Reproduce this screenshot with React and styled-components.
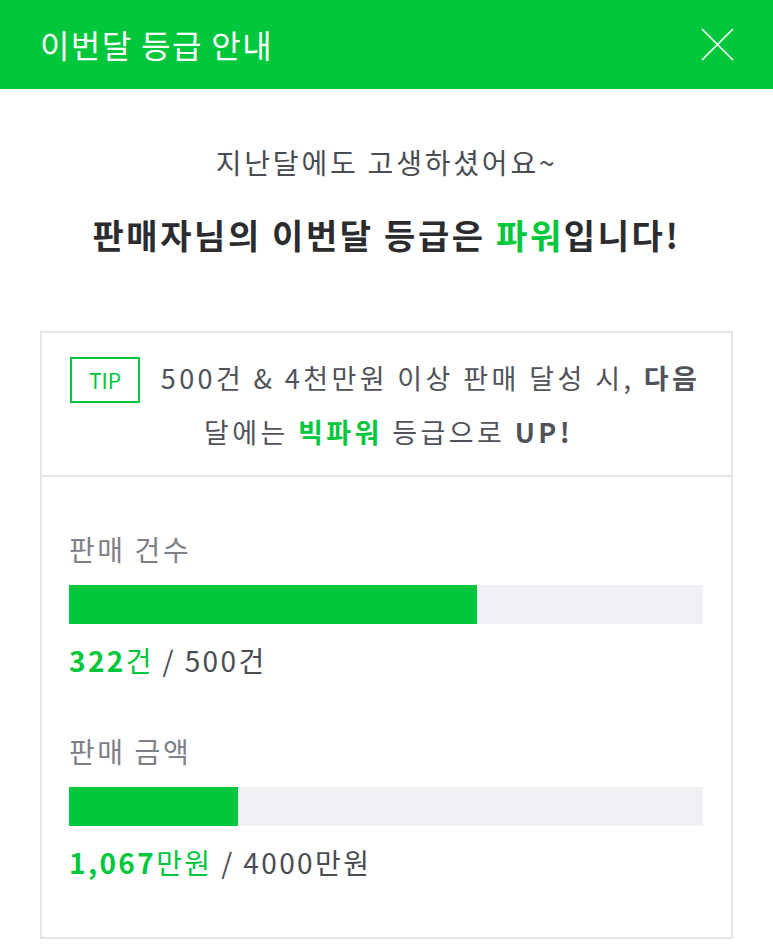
import React from 'react';
import styled, { createGlobalStyle } from 'styled-components';

const GREEN = '#00c73c';

const GlobalStyle = createGlobalStyle`
  html, body {
    margin: 0;
    padding: 0;
    background: #fff;
  }
  body {
    font-family: "Noto Sans CJK KR", "Noto Sans", sans-serif;
  }
`;

const Page = styled.div`
  width: 773px;
  min-height: 952px;
  background: #fff;
`;

const Header = styled.header`
  height: 89px;
  background: ${GREEN};
  display: flex;
  align-items: center;
  justify-content: space-between;
  padding: 0 38px 0 40px;
  box-sizing: border-box;
`;

const Title = styled.h1`
  margin: 0 0 2px;
  font-size: 32px;
  font-weight: 400;
  color: #fff;
  letter-spacing: 1.4px;
`;

const CloseButton = styled.button`
  border: 0;
  background: none;
  padding: 0;
  width: 36px;
  height: 36px;
  display: flex;
  cursor: pointer;
`;

const Greeting = styled.section`
  padding: 53px 0 74px;
  text-align: center;
`;

const SubText = styled.p`
  margin: 0;
  font-size: 28px;
  line-height: 40px;
  color: #4a4c53;
  letter-spacing: 2.8px;
`;

const MainText = styled.p`
  margin: 31px 0 0;
  font-size: 34px;
  line-height: 44px;
  font-weight: 700;
  color: #2b2c30;
  letter-spacing: 2.6px;
`;

const Green = styled.span`
  color: ${GREEN};
  font-weight: ${p => (p.$bold ? 700 : 'inherit')};
`;

const Strong = styled.b`
  font-weight: 700;
`;

const Card = styled.div`
  margin: 0 40px;
  border: 2px solid #e3e5ea;
  height: 608px;
  box-sizing: border-box;
`;

const TipBox = styled.div`
  border-bottom: 2px solid #e3e5ea;
  padding: 18px 24px 0 28px;
  height: 144px;
  box-sizing: border-box;
  text-align: center;
  font-size: 27px;
  line-height: 54px;
  color: #4f525a;
  letter-spacing: 3.4px;
`;

const TipBadge = styled.span`
  float: left;
  display: inline-flex;
  align-items: center;
  justify-content: center;
  width: 70px;
  height: 46px;
  margin: 6px 14px 0 0;
  border: 2px solid ${GREEN};
  box-sizing: border-box;
  color: ${GREEN};
  font-size: 21px;
  line-height: 1;
  letter-spacing: 0;
`;

const Stats = styled.div`
  padding: 52px 28px 0 27px;
`;

const Stat = styled.div`
  margin-bottom: 51px;
`;

const StatLabel = styled.div`
  font-size: 28px;
  color: #7e8089;
  letter-spacing: 2.6px;
  line-height: 40px;
`;

const Bar = styled.div`
  margin-top: 16px;
  height: 39px;
  background: #f0f1f5;
`;

const BarFill = styled.div`
  height: 100%;
  background: ${GREEN};
`;

const StatValue = styled.div`
  margin-top: 16px;
  font-size: 28px;
  line-height: 40px;
  color: #4a4c53;
  letter-spacing: 2.4px;
`;

const stats = [
  { label: '판매 건수', current: 322, goal: 500, cur: '322건', max: '500건' },
  { label: '판매 금액', current: 1067, goal: 4000, cur: '1,067만원', max: '4000만원' },
];

const CurrentValue = ({ text }) => {
  const m = text.match(/^([\d,]+)(.*)$/);
  return (
    <Green>
      <Strong>{m[1]}</Strong>
      {m[2]}
    </Green>
  );
};

export default function App() {
  return (
    <Page>
      <GlobalStyle />
      <Header>
        <Title>이번달 등급 안내</Title>
        <CloseButton aria-label="닫기">
          <svg width="36" height="36" viewBox="0 0 36 36">
            <path d="M3 2 L34 33 M34 2 L3 33" stroke="#fff" strokeWidth="1.6" fill="none" />
          </svg>
        </CloseButton>
      </Header>
      <Greeting>
        <SubText>지난달에도 고생하셨어요~</SubText>
        <MainText>
          판매자님의 이번달 등급은 <Green>파워</Green>입니다!
        </MainText>
      </Greeting>
      <Card>
        <TipBox>
          <TipBadge>TIP</TipBadge>
          500건 &amp; 4천만원 이상 판매 달성 시, <Strong>다음</Strong>
          <br />
          달에는 <Green $bold>빅파워</Green> 등급으로 <Strong>UP!</Strong>
        </TipBox>
        <Stats>
          {stats.map(s => (
            <Stat key={s.label}>
              <StatLabel>{s.label}</StatLabel>
              <Bar>
                <BarFill style={{ width: `${(s.current / s.goal) * 100}%` }} />
              </Bar>
              <StatValue>
                <CurrentValue text={s.cur} /> / {s.max}
              </StatValue>
            </Stat>
          ))}
        </Stats>
      </Card>
    </Page>
  );
}
